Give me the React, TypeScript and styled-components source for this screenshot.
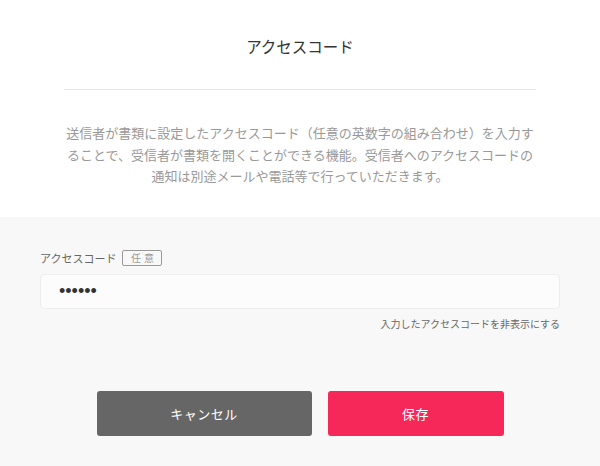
import React from "react"
import styled, { createGlobalStyle } from "styled-components"

const GlobalStyle = createGlobalStyle`
  html, body {
    margin: 0;
    padding: 0;
    background: #f8f8f8;
  }
  body {
    font-family: "Noto Sans CJK JP", "Noto Sans", sans-serif;
  }
`

const Page = styled.div`
  width: 600px;
  height: 466px;
  display: flex;
  flex-direction: column;
`

const Header = styled.section`
  background: #ffffff;
  padding: 36px 64px 30px;
  display: flex;
  flex-direction: column;
  align-items: stretch;
`

const Title = styled.h1`
  margin: 0;
  font-size: 15.5px;
  line-height: 20px;
  font-weight: 400;
  color: #333333;
  text-align: center;
`

const Divider = styled.hr`
  margin: 33px 0 0;
  border: none;
  height: 1px;
  background: #e6e6e6;
`

const Description = styled.p`
  margin: 32px 0 0;
  font-size: 13px;
  line-height: 21.5px;
  color: #999999;
  text-align: center;
`

const Body = styled.section`
  flex: 1;
  background: #f8f8f8;
  padding: 33px 40px 0;
  display: flex;
  flex-direction: column;
`

const LabelRow = styled.div`
  display: flex;
  align-items: center;
  gap: 6px;
  height: 16px;
`

const Label = styled.label`
  font-size: 11px;
  line-height: 16px;
  color: #666666;
`

const Badge = styled.span`
  box-sizing: border-box;
  height: 16px;
  width: 40px;
  border: 1px solid #999999;
  border-radius: 2px;
  font-size: 10px;
  line-height: 14px;
  color: #999999;
  letter-spacing: 3px;
  text-align: center;
  padding-left: 3px;
`

const Input = styled.input`
  box-sizing: border-box;
  margin-top: 8px;
  width: 100%;
  height: 35px;
  padding: 0 18px;
  background: #fcfcfc;
  border: 1px solid #eeeeee;
  border-radius: 4px;
  font-size: 18px;
  color: #333333;
  outline: none;
  letter-spacing: 0px;
`

const Hint = styled.div`
  margin-top: 8px;
  font-size: 10px;
  line-height: 14px;
  color: #666666;
  text-align: right;
`

const Actions = styled.div`
  margin-top: 60px;
  display: flex;
  justify-content: center;
  gap: 16px;
`

const Button = styled.button<{ $primary?: boolean }>`
  width: ${(p) => (p.$primary ? "176px" : "215px")};
  height: 45px;
  border: none;
  border-radius: 3px;
  background: ${(p) => (p.$primary ? "#f6285a" : "#666666")};
  color: #ffffff;
  font-family: inherit;
  font-size: 13px;
  letter-spacing: 0.5px;
  cursor: pointer;
`

const App = () => {
  return (
    <>
      <GlobalStyle />
      <Page>
        <Header>
          <Title>アクセスコード</Title>
          <Divider />
          <Description>
            送信者が書類に設定したアクセスコード（任意の英数字の組み合わせ）を入力することで、受信者が書類を開くことができる機能。受信者へのアクセスコードの通知は別途メールや電話等で行っていただきます。
          </Description>
        </Header>
        <Body>
          <LabelRow>
            <Label htmlFor="access-code">アクセスコード</Label>
            <Badge>任意</Badge>
          </LabelRow>
          <Input id="access-code" type="password" defaultValue="123456" readOnly />
          <Hint>入力したアクセスコードを非表示にする</Hint>
          <Actions>
            <Button>キャンセル</Button>
            <Button $primary>保存</Button>
          </Actions>
        </Body>
      </Page>
    </>
  )
}

export default App
